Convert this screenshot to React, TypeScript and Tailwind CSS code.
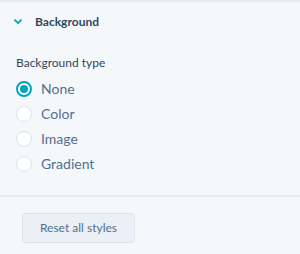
import React from "react";

const options = ["None", "Color", "Image", "Gradient"];

export default function App() {
  return (
    <div
      className="w-[300px] h-[254px] bg-[#f5f8fa] border-t-2 border-[#e5ebf2] overflow-hidden"
      style={{ fontFamily: "Lato, 'Noto Sans', sans-serif" }}
    >
      <div className="flex items-center h-[40px] pl-[14px]">
        <svg width="8" height="6" viewBox="0 0 8 6" className="mr-[13px]">
          <path d="M1 1.2 L4 4.2 L7 1.2" fill="none" stroke="#00a4bd" strokeWidth="1.8" strokeLinecap="round" strokeLinejoin="round" />
        </svg>
        <span className="text-[12px] font-bold text-[#33475b]">Background</span>
      </div>
      <div className="pl-[16px] pt-[13px]">
        <div className="text-[12px] text-[#33475b] leading-[16px] mb-[5px]">Background type</div>
        <div className="flex flex-col">
          {options.map((o, i) => (
            <label key={o} className="flex items-center h-[25px]">
              <span
                className={
                  "w-[16px] h-[16px] rounded-full border flex items-center justify-center bg-white " +
                  (i === 0 ? "border-[#00a4bd] border-2" : "border-[#dfe3eb]")
                }
              >
                {i === 0 && <span className="w-[8px] h-[8px] rounded-full bg-[#00a4bd]" />}
              </span>
              <span className="ml-[9px] text-[14px] text-[#516f90]">{o}</span>
            </label>
          ))}
        </div>
      </div>
      <div className="mt-[19px] border-t-2 border-[#e5ebf2]" />
      <div className="pl-[22px] pt-[16px]">
        <button className="w-[113px] h-[30px] bg-[#eaf0f6] border border-[#dfe3eb] rounded-[3px] text-[12px] text-[#516f90]">
          Reset all styles
        </button>
      </div>
    </div>
  );
}
